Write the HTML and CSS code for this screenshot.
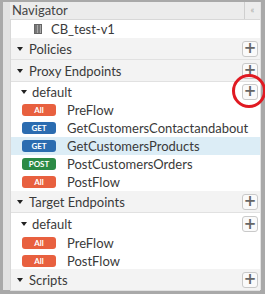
FILE: index.html
```html
<!DOCTYPE html>
<html lang="en">
<head>
  <meta charset="UTF-8">
  <title>Navigator</title>
  <link rel="stylesheet" href="styles.css">
</head>
<body>
  <div class="panel">
    <div class="header">
      <div class="title">Navigator</div>
      <div class="collapse">&laquo;</div>
    </div>
    <div class="tree">
      <div class="row root">
        <span class="doc-icon"></span>
        <span>CB_test-v1</span>
      </div>

      <div class="row section">
        <span class="caret"></span><span class="label">Policies</span>
        <button class="add">+</button>
      </div>

      <div class="row section">
        <span class="caret"></span><span class="label">Proxy Endpoints</span>
        <button class="add">+</button>
      </div>
      <div class="row sub">
        <span class="caret"></span><span class="label">default</span>
        <button class="add">+</button>
        <span class="mark"></span>
      </div>
      <div class="row flow"><span class="badge all">All</span>PreFlow</div>
      <div class="row flow"><span class="badge get">GET</span>GetCustomersContactandabout</div>
      <div class="row flow selected"><span class="badge get">GET</span>GetCustomersProducts</div>
      <div class="row flow"><span class="badge post">POST</span>PostCustomersOrders</div>
      <div class="row flow"><span class="badge all">All</span>PostFlow</div>

      <div class="row section">
        <span class="caret"></span><span class="label">Target Endpoints</span>
        <button class="add">+</button>
      </div>
      <div class="row sub tall">
        <span class="caret"></span><span class="label">default</span>
        <button class="add">+</button>
      </div>
      <div class="row flow"><span class="badge all">All</span>PreFlow</div>
      <div class="row flow short"><span class="badge all">All</span>PostFlow</div>

      <div class="row section last">
        <span class="caret"></span><span class="label">Scripts</span>
        <button class="add">+</button>
      </div>
    </div>
  </div>
</body>
</html>
```

FILE: styles.css
```css
body {
  margin: 0;
  background: #a9a9a9;
  font-family: Lato, "Liberation Sans", sans-serif;
  font-size: 13px;
  color: #3a3a3a;
  height: 294px;
  overflow: hidden;
}
.panel {
  margin: 2px 4px 0 3px;
  height: 288px;
  background: #e2e2e2;
  padding-left: 7px;
  padding-right: 1px;
}
.header {
  display: flex;
  height: 17px;
}
.title {
  flex: 1;
  background: #ececec;
  border-right: 1px solid #cfcfcf;
  padding-left: 2px;
  line-height: 16px;
  color: #444;
}
.collapse {
  width: 15px;
  background: #ececec;
  color: #aaa;
  font-size: 9px;
  text-align: center;
  line-height: 16px;
}
.tree {
  background: #fff;
  border-top: 1px solid #d8d8d8;
  border-left: 1px solid #d8d8d8;
}
.row {
  display: flex;
  align-items: center;
  position: relative;
  box-sizing: border-box;
}
.root {
  height: 18px;
  padding-left: 23px;
}
.doc-icon {
  width: 8px;
  height: 10px;
  border: 1px solid #666;
  box-sizing: border-box;
  margin-right: 9px;
  background: repeating-linear-gradient(90deg, #777 0 2px, #aaa 2px 3px);
}
.section {
  height: 22px;
  background: #f3f3f3;
  border-bottom: 1px solid #e1e1e1;
  padding-left: 6px;
}
.section .label {
  margin-left: 6px;
}
.sub {
  height: 19px;
  padding-left: 10px;
}
.sub.tall {
  height: 21px;
  padding-top: 1px;
}
.sub .label {
  margin-left: 5px;
}
.caret {
  width: 0;
  height: 0;
  border-left: 3px solid transparent;
  border-right: 3px solid transparent;
  border-top: 4px solid #222;
}
.add {
  margin-left: auto;
  margin-right: 2px;
  width: 16px;
  height: 16px;
  padding: 0;
  border: 1px solid #c9c9c9;
  border-radius: 3px;
  background: #fafafa;
  color: #666;
  font-family: "DejaVu Sans", sans-serif;
  font-size: 15px;
  font-weight: bold;
  line-height: 13px;
}
.flow {
  height: 18px;
  padding-left: 11px;
}
.flow.short {
  height: 17px;
}
.flow.selected {
  background: #dcedf6;
}
.badge {
  width: 34px;
  height: 12px;
  border-radius: 3px;
  color: #fff;
  font-size: 8px;
  font-weight: bold;
  text-align: center;
  line-height: 12px;
  margin-right: 11px;
}
.all {
  background: #e8603f;
}
.get {
  background: #2b6cb0;
}
.post {
  background: #2b8a45;
}
.mark {
  position: absolute;
  right: -6px;
  top: -8px;
  width: 28px;
  height: 28px;
  border: 3px solid #e01a22;
  border-radius: 50%;
}
```
